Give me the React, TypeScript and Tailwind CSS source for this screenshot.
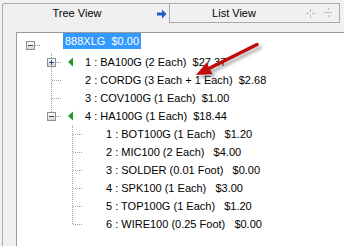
import React from "react";

type Line = "full" | "top" | "none";

const DOT = "#a0a0a0";

// one indent cell of the tree: dotted connectors + optional expander box
const Cell = ({
  vline = "none",
  hline = false,
  expander,
  h = 18,
  cy = 9,
}: {
  vline?: Line;
  hline?: boolean;
  expander?: "plus" | "minus";
  h?: number;
  cy?: number;
}) => (
  <svg width="21" height={h} className="shrink-0 block" shapeRendering="crispEdges">
    {vline !== "none" && (
      <line x1="10.5" y1="0" x2="10.5" y2={vline === "full" ? h : cy + 1} stroke={DOT} strokeDasharray="1 1" />
    )}
    {hline && <line x1="11" y1={cy + 0.5} x2="21" y2={cy + 0.5} stroke={DOT} strokeDasharray="1 1" />}
    {expander && (
      <g>
        <defs>
          <linearGradient id="exp" x1="0" y1="0" x2="0" y2="1">
            <stop offset="0" stopColor="#ffffff" />
            <stop offset="1" stopColor="#d4d4d4" />
          </linearGradient>
        </defs>
        <rect x="6.5" y={cy - 3.5} width="8" height="8" fill="url(#exp)" stroke="#8f8f8f" />
        <line x1="8" y1={cy + 0.5} x2="13" y2={cy + 0.5} stroke="#2a4a7c" />
        {expander === "plus" && <line x1="10.5" y1={cy - 2} x2="10.5" y2={cy + 3} stroke="#2a4a7c" />}
      </g>
    )}
  </svg>
);

const Marker = ({ on }: { on?: boolean }) => (
  <svg width="21" height="18" className="shrink-0 block">
    {on && <polygon points="11,4.5 11,13.5 6,9" fill="#1f9a1f" />}
  </svg>
);

const level1 = [
  { label: "1 : BA100G (2 Each)  $27.37", vline: "full" as Line, expander: "plus" as const, marker: true },
  { label: "2 : CORDG (3 Each + 1 Each)  $2.68", vline: "full" as Line },
  { label: "3 : COV100G (1 Each)  $1.00", vline: "full" as Line },
  { label: "4 : HA100G (1 Each)  $18.44", vline: "top" as Line, expander: "minus" as const, marker: true },
];

const level2 = [
  "1 : BOT100G (1 Each)   $1.20",
  "2 : MIC100 (2 Each)   $4.00",
  "3 : SOLDER (0.01 Foot)   $0.00",
  "4 : SPK100 (1 Each)   $3.00",
  "5 : TOP100G (1 Each)   $1.20",
  "6 : WIRE100 (0.25 Foot)   $0.00",
];

const Row = ({ children }: { children: React.ReactNode }) => (
  <div className="flex h-[18px] items-center">{children}</div>
);

const Label = ({ text }: { text: string }) => (
  <span className="px-[2px] whitespace-pre leading-[18px]">{text}</span>
);

export default function App() {
  return (
    <div
      className="w-[344px] h-[246px] bg-[#f0f0f0] overflow-hidden relative flex flex-col pt-[3px] pl-[2px] text-[11px] text-black"
      style={{ fontFamily: '"Liberation Sans", Arial, sans-serif' }}
    >
      {/* tab strip */}
      <div className="flex h-[20px] shrink-0">
        <div className="w-[167px] border-l border-t border-[#a9a9a9] rounded-tl-[3px] flex items-center">
          <span className="w-[148px] text-center">Tree View</span>
          <svg width="10" height="10" className="ml-[6px] block">
            <path d="M0 3.5 h5 v-3 l4.5 4.5 -4.5 4.5 v-3 h-5 z" fill="#1c5bd0" />
          </svg>
        </div>
        <div className="w-[171px] border border-[#a9a9a9] flex items-center">
          <span className="w-[128px] text-center">List View</span>
          <svg width="9" height="9" className="ml-[8px] block" shapeRendering="crispEdges">
            <rect x="4" y="0" width="1" height="3" fill="#bdbdbd" />
            <rect x="4" y="6" width="1" height="3" fill="#bdbdbd" />
            <rect x="0" y="4" width="3" height="1" fill="#bdbdbd" />
            <rect x="6" y="4" width="3" height="1" fill="#bdbdbd" />
          </svg>
          <svg width="9" height="10" className="ml-[9px] block" shapeRendering="crispEdges">
            <rect x="4" y="0" width="1" height="2" fill="#bdbdbd" />
            <rect x="0" y="4" width="8" height="1" fill="#bdbdbd" />
            <rect x="4" y="7" width="1" height="2" fill="#bdbdbd" />
            <rect x="6" y="7" width="2" height="1" fill="#dcdcdc" />
          </svg>
        </div>
      </div>

      {/* body */}
      <div className="flex-1 border-l border-[#a9a9a9] pt-[9px] pl-[13px] flex flex-col">
        <div className="flex-1 bg-white border-l border-t border-[#9a9a9a] pl-[3px]">
          {/* root */}
          <div className="flex h-[20px] items-start">
            <Cell hline expander="minus" h={20} cy={12} />
            <div className="w-[22px] shrink-0" />
            <span className="px-[2px] h-4 leading-4 bg-[#3399ff] text-white whitespace-pre">888XLG  $0.00</span>
          </div>
          {level1.map((n) => (
            <Row key={n.label}>
              <Cell />
              <Cell vline={n.vline} hline expander={n.expander} />
              <Marker on={n.marker} />
              <Label text={n.label} />
            </Row>
          ))}
          {level2.map((t, i) => (
            <Row key={t}>
              <Cell />
              <Cell />
              <Cell vline={i === level2.length - 1 ? "top" : "full"} hline />
              <Marker />
              <Label text={t} />
            </Row>
          ))}
        </div>
      </div>

      {/* red callout arrow */}
      <svg width="344" height="246" className="absolute left-0 top-0 pointer-events-none">
        <defs>
          <filter id="blur" x="-20%" y="-20%" width="140%" height="140%">
            <feGaussianBlur stdDeviation="1.6" />
          </filter>
        </defs>
        <g transform="translate(3 3)" opacity="0.45" filter="url(#blur)">
          <line x1="207" y1="69.5" x2="257" y2="44.5" stroke="#555" strokeWidth="3.5" strokeLinecap="round" />
          <polygon points="196,75 212.3,74.1 206.5,62.5" fill="#555" />
        </g>
        <line x1="207" y1="69.5" x2="257" y2="44.5" stroke="#c40a0a" strokeWidth="3.5" strokeLinecap="round" />
        <polygon points="196,75 212.3,74.1 206.5,62.5" fill="#c40a0a" />
      </svg>
    </div>
  );
}
